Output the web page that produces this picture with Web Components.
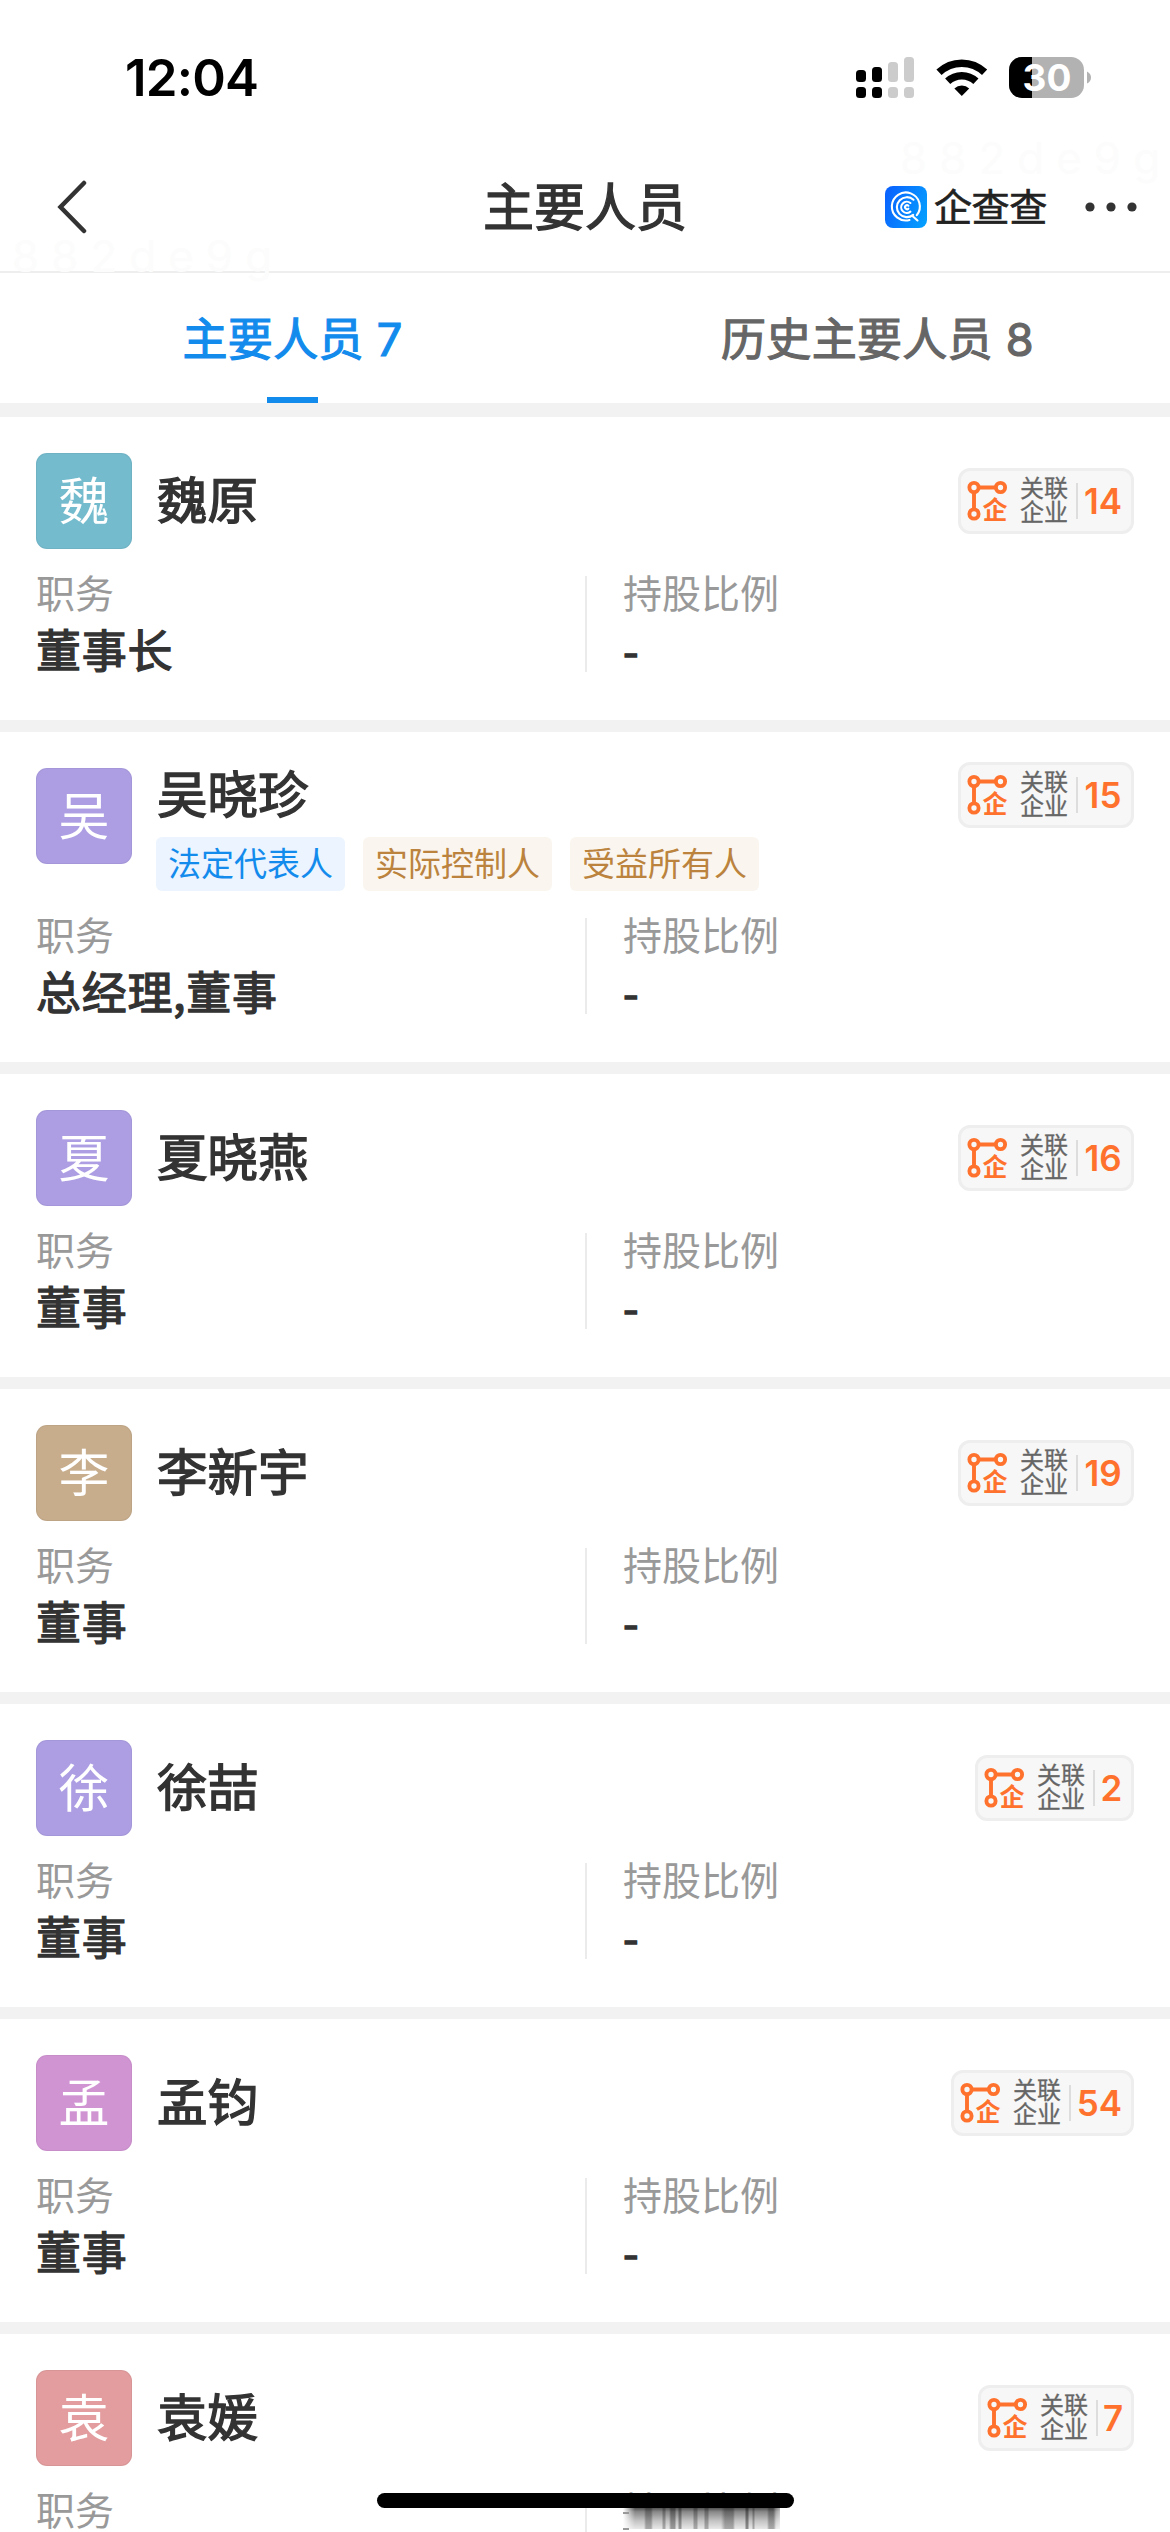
<!DOCTYPE html>
<html lang="zh-CN">
<head>
<meta charset="utf-8">
<title>主要人员</title>
<style>
html,body{margin:0;padding:0}
body{width:1170px;height:2532px;overflow:hidden;background:#fff;color:#333;font-family:Inter,"Noto Sans CJK SC",sans-serif}
</style>
</head>
<body>
<app-screen></app-screen>
<script>
const define = (name, html) => customElements.define(name, class extends HTMLElement {
  constructor() {
    super();
    this.attachShadow({mode: 'open'});
  }
  connectedCallback() {
    const t = document.createElement('template');
    t.innerHTML = typeof html === 'function' ? html(this) : html;
    this.shadowRoot.replaceChildren(t.content.cloneNode(true));
  }
});

define('status-bar', `
<style>
:host{display:flex;flex:none;height:156px;box-sizing:border-box;padding:57px 79px 0 125px;justify-content:space-between;align-items:flex-start;color:#000}
.time{font-size:51px;line-height:42px;font-weight:600;letter-spacing:-.8px}
svg{display:block}
</style>
<span class="time">12:04</span>
<svg width="236" height="42" viewBox="855 57 236 42">
  <g fill="#000"><rect x="856" y="70" width="10" height="12" rx="3.5"/><rect x="872" y="67" width="10" height="15" rx="3.5"/><rect x="856" y="87" width="10" height="11" rx="3.5"/><rect x="872" y="87" width="10" height="11" rx="3.5"/></g>
  <g fill="#ccc"><rect x="888" y="62" width="10" height="20" rx="3.5"/><rect x="904" y="57" width="10" height="25" rx="3.5"/><rect x="888" y="87" width="10" height="11" rx="3.5"/><rect x="904" y="87" width="10" height="11" rx="3.5"/></g>
  <g fill="none" stroke="#000" stroke-width="7.5"><path d="M939 72.3a33 33 0 0 1 45.600 0"/><path d="M947.700 81.300a20.500 20.500 0 0 1 28.200 0"/></g>
  <path d="M961.800 96l-7.400-7.500a10.600 10.600 0 0 1 14.800 0z" fill="#000"/>
  <clipPath id="b"><rect x="1009" y="57" width="75" height="41" rx="13"/></clipPath>
  <g clip-path="url(#b)"><rect x="1009" y="57" width="75" height="41" fill="#b2b2b2"/><rect x="1009" y="57" width="23" height="41" fill="#000"/></g>
  <path d="M1087 71.500q4 2 4 6t-4 6z" fill="#b2b2b2"/>
  <text x="1047" y="91" text-anchor="middle" font-size="37" font-weight="700" fill="#fff" font-family="Inter,sans-serif">30</text>
</svg>`);

define('brand-logo', `
<style>
:host{display:flex;align-items:center;gap:7px}
svg{display:block}
span{font-size:38px;line-height:42px;color:#222;-webkit-text-stroke:.7px #222;letter-spacing:-.3px}
</style>
<svg width="42" height="42" viewBox="0 0 42 42">
  <defs><linearGradient id="g" x1="0" y1=".3" x2="1" y2=".7"><stop stop-color="#0a64ff"/><stop offset="1" stop-color="#059dff"/></linearGradient></defs>
  <rect width="42" height="42" rx="8" fill="url(#g)"/>
  <g fill="none" stroke="#fff" stroke-width="2.100" stroke-linecap="round">
    <path d="M24.500 34a14 14 0 1 1 7.300-4.800"/><path d="M28 30.500l4.500 4"/>
    <path d="M28.500 13.700a10 10 0 1 0-.3 15.200"/>
    <path d="M25.400 17a5.600 5.600 0 1 0 0 8.600"/>
    <path d="M23.400 19.700a2 2 0 1 0 0 3"/>
  </g>
</svg>
<span>企查查</span>`);

define('nav-bar', `
<style>
:host{display:grid;flex:none;grid-template-columns:1fr auto 1fr;height:117px;box-sizing:border-box;border-bottom:2px solid #eee;padding:0 33px 13px 56px;align-items:center}
h1{margin:2px 0 0;font-size:51px;line-height:60px;font-weight:400;-webkit-text-stroke:1.3px #333;padding-right:23px}
.right{display:flex;justify-content:flex-end;align-items:center;gap:38px}
svg{display:block}
</style>
<svg width="34" height="54" viewBox="0 0 34 54"><path d="M28 3L4.500 27 28 51" fill="none" stroke="#333" stroke-width="4.500" stroke-linecap="round"/></svg>
<h1><slot></slot></h1>
<div class="right"><brand-logo></brand-logo>
<svg width="52" height="12" viewBox="0 0 52 12" fill="#333"><circle cx="5" cy="6" r="4.600"/><circle cx="26" cy="6" r="4.600"/><circle cx="47" cy="6" r="4.600"/></svg></div>`);

define('tab-item', `
<style>
:host{flex:1;display:flex;flex-direction:column;align-items:center;justify-content:flex-end;gap:29px;color:#666}
:host([active]){color:#128bed}
span{font-size:45px;line-height:56px;letter-spacing:.3px;-webkit-text-stroke:1.2px currentColor}
i{display:block;width:51px;height:6px}
:host([active]) i{background:#128bed}
</style>
<span><slot></slot></span><i></i>`);

define('tab-bar', `
<style>:host{display:flex;flex:none;height:130px;border-bottom:1px solid #ebebeb}</style><slot></slot>`);

define('related-badge', el => `
<style>
:host{display:flex;box-sizing:border-box;flex:none;height:66px;border:3px solid #eee;border-radius:12px;background:#f7f7f7;align-items:center}
svg{display:block;margin-left:6px}
.label{width:48px;font-size:24px;line-height:24px;color:#666;margin:0 8px 0 12px;-webkit-text-stroke:.3px #666}
i{width:2px;height:36px;background:#ddd}
b{flex:1;text-align:center;padding-right:3px;font-size:35px;line-height:40px;font-weight:600;color:#ff722d}
</style>
<svg width="41" height="44" viewBox="0 0 41 44">
  <g fill="none" stroke="#ff722d" stroke-width="3.900"><circle cx="7" cy="8.500" r="4.600"/><circle cx="33.500" cy="8.500" r="4.600"/><circle cx="7" cy="35" r="4.600"/><path d="M11.500 8.500H29M7 13v17.500"/></g>
  <text x="15.500" y="39.800" font-size="25" font-weight="700" fill="#ff722d" font-family="Noto Sans CJK SC,sans-serif">企</text>
</svg>
<span class="label">关联<br>企业</span><i></i><b>${el.getAttribute('count')}</b>`);

define('role-tag', `
<style>
:host{display:block;padding:0 12px;height:54px;line-height:55px;font-size:33px;border-radius:6px;background:#faf6ef;color:#bb833d}
:host([tone=blue]){background:#ebf4ff;color:#128bed}
</style><slot></slot>`);

define('info-field', el => `
<style>
:host{display:flex;flex-direction:column;flex:1;height:96px;gap:7px}
.l{font-size:39px;line-height:36px;color:#999}
.v{font-family:"Noto Sans CJK SC",sans-serif;font-size:45px;line-height:60px;color:#333;letter-spacing:.7px;-webkit-text-stroke:1.300px #333;white-space:nowrap}
</style>
<span class="l">${el.getAttribute('label')}</span><span class="v"><slot></slot></span>`);

define('person-card', el => {
  const a = n => el.getAttribute(n);
  const tags = a('tags') ? a('tags').split(' ') : [];
  return `
<style>
:host{display:flex;flex-direction:column;gap:27px;box-sizing:border-box;padding:36px 36px 48px;background:#fff;margin-bottom:12px;flex:none}
.head{display:flex;gap:25px;align-items:flex-start}
.avatar{flex:none;width:96px;height:96px;border-radius:11px;box-sizing:border-box;border:1px solid #0000000c;background:${a('color')};color:#fff;font-size:51px;line-height:96px;text-align:center}
.main{flex:1;display:flex;flex-direction:column;gap:9px;margin-top:${tags.length ? -6 : 15}px}
.row{display:flex;justify-content:space-between;height:66px}
.name{font-size:50.500px;line-height:66px;-webkit-text-stroke:1.400px #333}
.tags{display:flex;gap:18px;margin-left:-1px}
.fields{display:flex}
.fields i{flex:none;width:2px;height:96px;background:#ebebeb;margin-right:36px}
related-badge{width:${a('badge')}px}
</style>
<div class="head"><div class="avatar">${a('name')[0]}</div>
<div class="main"><div class="row"><span class="name">${a('name')}</span><related-badge count="${a('count')}"></related-badge></div>
${tags.length ? `<div class="tags">${tags.map((t, i) => `<role-tag${i ? '' : ' tone="blue"'}>${t}</role-tag>`).join('')}</div>` : ''}</div></div>
<div class="fields"><info-field label="职务" style="flex:0 0 549px">${a('role')}</info-field><i></i><info-field label="持股比例">-</info-field></div>`;
});

/* Home bar floats over the list; the text passing under it is smeared downwards. */
define('home-indicator', `
<style>
:host{display:block;position:absolute;left:377px;top:2493px;width:417px;height:39px}
.bar{position:absolute;inset:0 0 auto;height:15px;border-radius:7.500px;background:#000}
.smear{position:absolute;left:246px;top:13px;width:157px;height:23px;background:
linear-gradient(90deg,#fff 0,#fff0 12px,#fff0 150px,#fff8 157px),
linear-gradient(90deg,#0000 21px,#0004 23px 28px,#0000 30px 39px,#0004 40px 42px,#0000 43px 46px,#0005 48px 52px,#0000 53px 55px,#0005 56px 58px,#0000 59px 70px,#0004 71px 74px,#0000 75px 81px,#0004 82px 85px,#0000 86px 98px,#0004 102px 110px,#0000 112px 122px,#0006 123px 125px,#0000 126px 129px,#0004 130px 131px,#0000 132px 144px,#0004 146px 151px,#0000 153px),
linear-gradient(#333 0,#888 25%,#c4c4c4 65%,#e8e8e8 100%)}
.smear::before{content:"";position:absolute;left:0;top:6px;width:6px;height:14px;border:solid #999;border-width:2px 0}
</style>
<div class="smear"></div><div class="bar"></div>`);

define('faint-mark', `
<style>:host{display:block;position:absolute;font:44px/44px Inter,sans-serif;color:#fcfcfc;letter-spacing:12px;white-space:nowrap;pointer-events:none}</style><slot></slot>`);

define('app-screen', `
<style>
:host{display:flex;flex-direction:column;position:relative;width:1170px;height:2532px;overflow:hidden;background:#fff}
.list{flex:none;background:#f2f2f2;padding-top:14px;display:flex;flex-direction:column}
tab-bar{margin-bottom:-1px}
</style>
<status-bar></status-bar>
<nav-bar>主要人员</nav-bar>
<tab-bar><tab-item active>主要人员 7</tab-item><tab-item>历史主要人员 8</tab-item></tab-bar>
<div class="list">
<person-card name="魏原" color="#74bbce" count="14" badge="176" role="董事长"></person-card>
<person-card name="吴晓珍" color="#ad9ee4" count="15" badge="176" role="总经理,董事" tags="法定代表人 实际控制人 受益所有人"></person-card>
<person-card name="夏晓燕" color="#ad9ee4" count="16" badge="176" role="董事"></person-card>
<person-card name="李新宇" color="#c7ad8c" count="19" badge="176" role="董事"></person-card>
<person-card name="徐喆" color="#ad9ee4" count="2" badge="159" role="董事"></person-card>
<person-card name="孟钧" color="#d194d3" count="54" badge="183" role="董事"></person-card>
<person-card name="袁媛" color="#e39d9e" count="7" badge="156" role="董事"></person-card>
</div>
<faint-mark style="left:900px;top:136px">882de9g</faint-mark>
<faint-mark style="left:12px;top:234px">882de9g</faint-mark>
<home-indicator></home-indicator>`);
</script>
</body>
</html>
